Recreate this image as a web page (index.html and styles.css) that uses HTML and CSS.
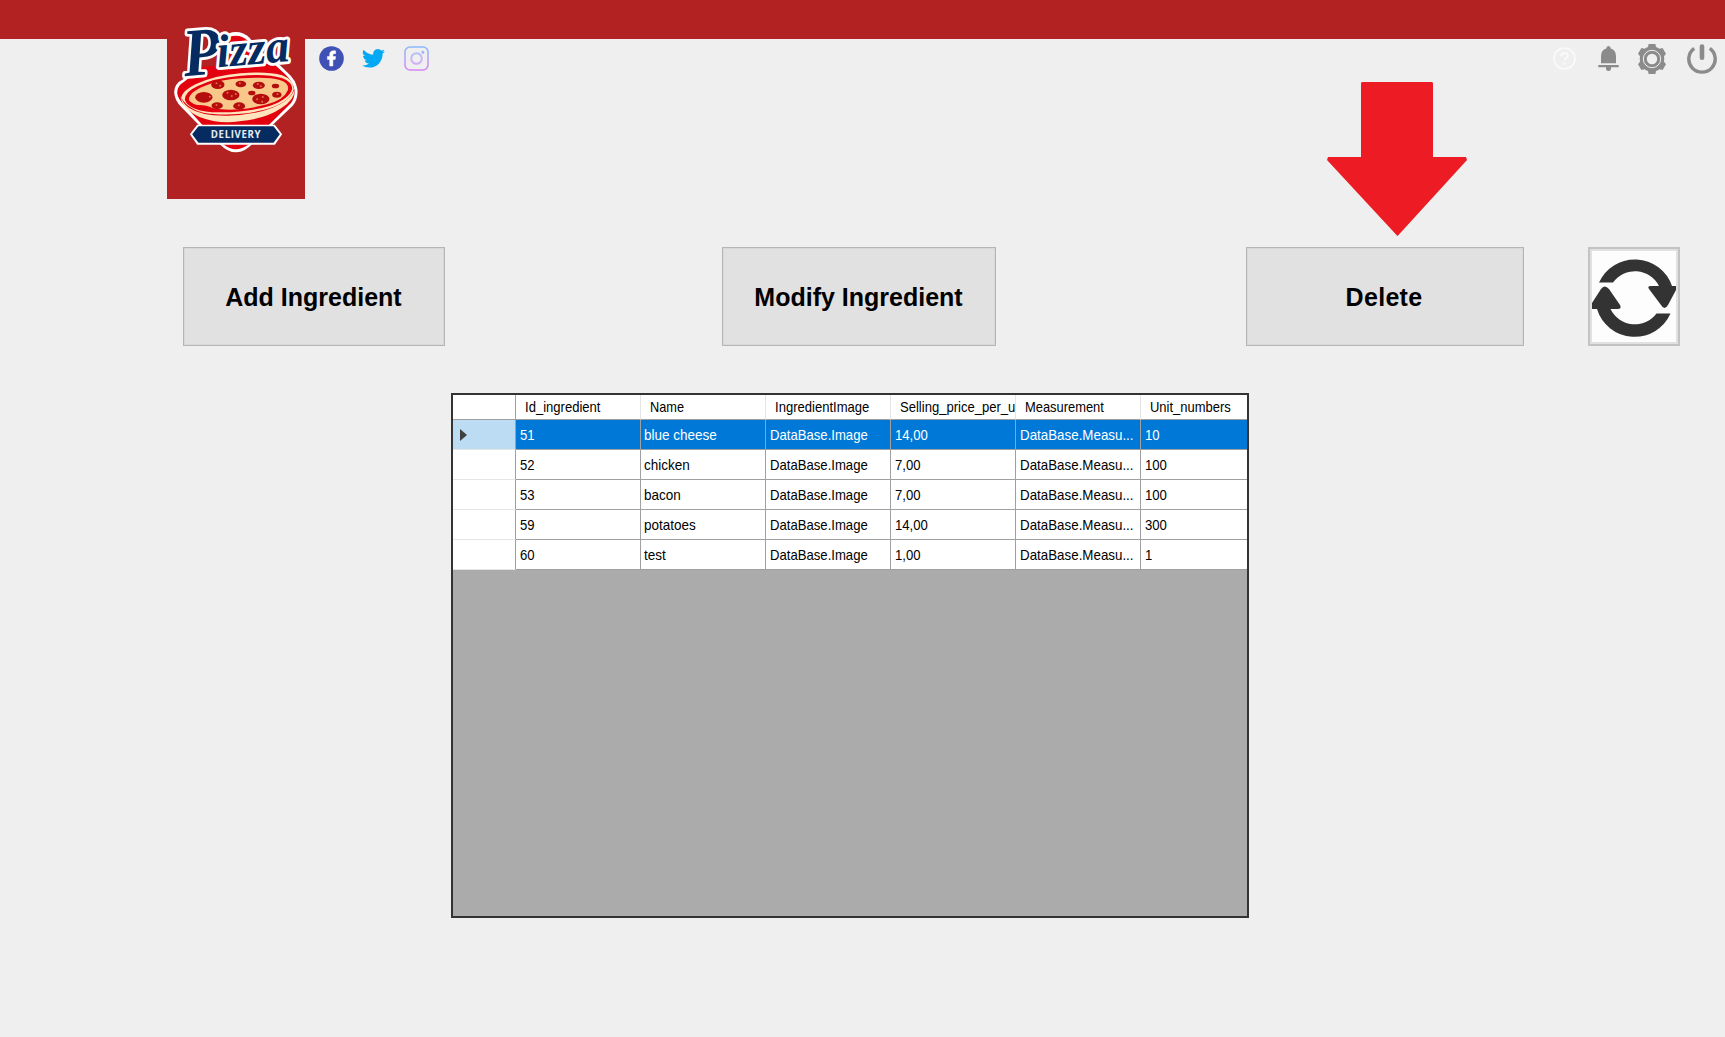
FILE: index.html
```html
<!DOCTYPE html>
<html lang="en">
<head>
<meta charset="utf-8">
<title>Pizza Delivery - Ingredients</title>
<link rel="stylesheet" href="styles.css">
</head>
<body>
<header class="topbar"></header>
<section class="toolbar">
  <div class="brand">
    <svg class="logo" viewBox="22 117 413 480" role="img" aria-label="Pizza Delivery">
      <circle cx="228" cy="153" r="57" fill="#fff"/>
      <path d="M70 238 Q43 251 43 277 Q44 302 65 322 L120 378 L178 431 Q205 458 230 457 Q255 456 278 431 L338 375 L398 318 Q415 299 413 270 Q409 240 382 217 L350 185 L120 205Z" fill="#fff"/>
      <circle cx="228" cy="156" r="49" fill="#e3000f"/>
      <path d="M72 246 Q52 257 52 278 Q53 296 76 318 L128 375 L186 430 Q210 449 230 448 Q250 447 271 430 L330 372 L393 310 Q406 292 404 270 Q400 246 376 223 L340 190 L130 200Z" fill="#e3000f"/>
      <path d="M62 288 Q65 326 119 351 Q176 373 239 364 Q318 356 365 324 Q405 300 404 268 Q392 302 338 323 Q281 345 205 347 Q126 349 87 323 Q68 310 62 288Z" fill="#ffe5bd"/>
      <path d="M64 293 Q68 272 107 253 Q164 226 242 220 Q322 213 367 226 Q400 238 402 267 Q393 304 329 325 Q259 347 170 343 Q91 339 64 293Z" fill="#ffe5bd"/>
      <path d="M75 299 Q75 275 114 258 Q163 234 237 228 Q318 220 366 234 Q397 245 397 267 Q388 298 329 318 Q260 338 178 337 Q88 336 75 299Z" fill="#e3000f"/>
      <path d="M88 301 Q83 278 136 257 Q185 238 247 235 Q323 229 360 240 Q389 249 384 271 Q372 300 322 313 Q282 324 237 328 Q196 332 158 324 Q139 314 112 315 Q94 311 88 301Z" fill="#fac78b"/>
      <g fill="#b30d0d">
        <ellipse cx="132" cy="292" rx="26" ry="16"/><ellipse cx="213" cy="285" rx="26" ry="16"/>
        <ellipse cx="303" cy="297" rx="26" ry="16"/><ellipse cx="174" cy="254" rx="20" ry="13"/>
        <ellipse cx="243" cy="252" rx="16" ry="10"/><ellipse cx="297" cy="256" rx="18" ry="11"/>
        <ellipse cx="347" cy="258" rx="11" ry="7"/><ellipse cx="276" cy="279" rx="11" ry="7"/>
        <ellipse cx="351" cy="284" rx="14" ry="9"/><ellipse cx="172" cy="317" rx="17" ry="10"/>
        <ellipse cx="238" cy="318" rx="18" ry="11"/>
      </g>
      <g fill="#ec6b43">
        <circle cx="150" cy="290" r="3"/><circle cx="203" cy="278" r="3"/><circle cx="216" cy="288" r="3"/><circle cx="228" cy="282" r="3"/>
        <circle cx="292" cy="298" r="3"/><circle cx="309" cy="291" r="3"/><circle cx="307" cy="305" r="3"/><circle cx="170" cy="250" r="3"/>
        <circle cx="181" cy="257" r="3"/><circle cx="240" cy="250" r="3"/><circle cx="294" cy="252" r="3"/><circle cx="303" cy="259" r="3"/>
        <circle cx="170" cy="315" r="3"/><circle cx="237" cy="316" r="3"/><circle cx="353" cy="282" r="3"/>
      </g>
      <path d="M90 403 L112 374 H345 L367 403 L345 434 H112Z" fill="#fff"/>
      <path d="M97 403 L116 379 H341 L360 403 L341 428 H116Z" fill="#062b60"/>
      <text class="logo-sub" x="153" y="414" textLength="149">DELIVERY</text>
      <g class="logo-name" transform="rotate(-5 220 190)">
        <text x="72" y="216" font-size="204" textLength="112" lengthAdjust="spacingAndGlyphs">P</text>
        <text x="173" y="198" font-size="140" textLength="218" lengthAdjust="spacingAndGlyphs">izza</text>
      </g>
    </svg>
  </div>
  <nav class="social">
    <svg width="25" height="25" viewBox="0 0 25 25"><circle cx="12.5" cy="12.5" r="12.3" fill="#3f51b5"/><path d="M10.700 20V13.500H8.400V10.500H10.700V8.600C10.700 6 12.100 4.800 14.500 4.800H16.600V7.700H15.200C14.200 7.700 13.900 8.100 13.900 9V10.500H16.600L16.200 13.500H13.900V20Z" fill="#fff" stroke="#fff" stroke-width=".5"/></svg>
    <svg width="23" height="21" viewBox="0 0 24 20"><path fill="#03a9f4" d="M24 2.400a10 10 0 0 1-2.800.8A5 5 0 0 0 23.300.5a10 10 0 0 1-3.100 1.200A4.920 4.920 0 0 0 11.800 6.200 14 14 0 0 1 1.700.9a4.900 4.900 0 0 0 1.500 6.600 5 5 0 0 1-2.200-.6c0 2.300 1.600 4.400 3.900 4.900a5 5 0 0 1-2.200.1 4.900 4.900 0 0 0 4.600 3.400A9.900 9.900 0 0 1 0 17.300 13.900 13.900 0 0 0 7.500 19.500c9.100 0 14.300-7.700 14-14.600A10 10 0 0 0 24 2.400Z"/></svg>
    <svg width="25" height="25" viewBox="0 0 25 25" fill="none" stroke="url(#ig)" stroke-width="1.600"><defs><linearGradient id="ig" gradientUnits="userSpaceOnUse" x1="12" y1="0" x2="12" y2="25"><stop stop-color="#84baff"/><stop offset=".5" stop-color="#b9a6fb"/><stop offset="1" stop-color="#d982f5"/></linearGradient></defs><rect x="1" y="1" width="23" height="23" rx="5"/><circle cx="12.500" cy="12.500" r="5.300" stroke-width="2" opacity=".75"/><circle cx="18.900" cy="6.200" r=".7"/></svg>
  </nav>
  <nav class="system">
    <svg width="23" height="23" viewBox="0 0 23 23"><circle cx="11.500" cy="11.500" r="10.500" fill="none" stroke="#fafafa" stroke-width="1.700"/><path d="M8.300 9.200C8.300 5 14.800 5 14.800 8.900C14.800 11 11.600 11.200 11.600 13.600" fill="none" stroke="#fafafa" stroke-width="2"/><circle cx="11.600" cy="16.500" r="1.200" fill="#fafafa"/></svg>
    <svg width="21" height="26" viewBox="0 0 21 26" fill="#8b8b8b"><path d="M8.300 2.500Q8.300 0 10.500 0T12.700 2.500Q18 4 18 10V17.300H3V10Q3 4 8.300 2.500ZM.3 19H20.700V21.300H.3ZM8 21.300H13V23Q13 25 10.500 25T8 23Z"/></svg>
    <svg width="28" height="30" viewBox="0 0 28 30"><path d="M10.600 0H17.400L18 3Q20 3.600 21.500 4.800L24.600 4L28 9.700L26 12.200Q26.500 15 26 17.800L28 20.300L24.600 26L21.500 25.200Q20 26.400 18 27L17.400 30H10.600L10 27Q8 26.400 6.500 25.200L3.400 26L0 20.300L2 17.800Q1.500 15 2 12.200L0 9.700L3.400 4L6.500 4.800Q8 3.600 10 3Z" fill="#8b8b8b"/><circle cx="14" cy="15" r="8.700" fill="none" stroke="#efefef" stroke-width="1"/><circle cx="14" cy="15" r="5.200" fill="#efefef"/></svg>
    <svg width="30" height="30" viewBox="0 0 30 30" fill="none" stroke="#8b8b8b"><path d="M7.200 4.300A13.200 13.200 0 1 0 22.800 4.300" stroke-width="3.400"/><path d="M15 2.500V13.800" stroke-width="4.600" stroke-linecap="round"/></svg>
  </nav>
</section>

<main>
  <div class="actions">
    <button class="btn add">Add Ingredient</button>
    <button class="btn modify">Modify Ingredient</button>
    <button class="btn delete">Delete</button>
    <button class="btn refresh" aria-label="Refresh">
      <svg viewBox="0 0 84 92" fill="#333">
        <path d="M7 31.500A39.300 39.300 0 0 1 80 35H84V39L76 54Q72.500 60 69 54L57 38Q55 35 59 35H67A27 27 0 0 0 21 31.500Z"/>
        <path d="M78.500 62.500A39.300 39.300 0 0 1 5 58H0V52L9 38Q12.500 33 17 38L28 54Q30 58 26 58H18.500A27 27 0 0 0 64.500 62.500Z"/>
      </svg>
    </button>
    <svg class="pointer" viewBox="0 0 140 154"><path d="M35 0H105L106 1V75H139L140 78L71.500 153L70.500 154L69.500 153L0 78L1 75H34V1Z" fill="#ed1c24"/></svg>
  </div>

  <div class="datagrid">
    <table>
      <colgroup><col class="c-row"><col class="c"><col class="c"><col class="c"><col class="c"><col class="c"><col class="c-last"></colgroup>
      <thead><tr><th></th><th><span class="w-id">Id_ingredient</span></th><th><span class="w-name">Name</span></th><th><span class="w-image">IngredientImage</span></th><th><span class="w-price">Selling_price_per_u</span></th><th><span class="w-measure">Measurement</span></th><th><span class="w-units">Unit_numbers</span></th></tr></thead>
      <tbody>
        <tr class="selected"><td><i class="marker"></i></td><td><span>51</span></td><td><span>blue cheese</span></td><td><span>DataBase.Image</span></td><td><span>14,00</span></td><td><span>DataBase.Measu...</span></td><td><span>10</span></td></tr>
        <tr><td></td><td><span>52</span></td><td><span>chicken</span></td><td><span>DataBase.Image</span></td><td><span>7,00</span></td><td><span>DataBase.Measu...</span></td><td><span>100</span></td></tr>
        <tr><td></td><td><span>53</span></td><td><span>bacon</span></td><td><span>DataBase.Image</span></td><td><span>7,00</span></td><td><span>DataBase.Measu...</span></td><td><span>100</span></td></tr>
        <tr><td></td><td><span>59</span></td><td><span>potatoes</span></td><td><span>DataBase.Image</span></td><td><span>14,00</span></td><td><span>DataBase.Measu...</span></td><td><span>300</span></td></tr>
        <tr><td></td><td><span>60</span></td><td><span>test</span></td><td><span>DataBase.Image</span></td><td><span>1,00</span></td><td><span>DataBase.Measu...</span></td><td><span>1</span></td></tr>
      </tbody>
    </table>
  </div>
</main>
</body>
</html>
```
FILE: styles.css
```css
* { box-sizing: border-box; }
body {
  margin: 0;
  height: 1037px;
  overflow: hidden;
  background: #efefef;
  font-family: "Liberation Sans", Arial, sans-serif;
  color: #000;
}
.topbar { height: 39px; background: #b22222; }
.toolbar { display: flex; align-items: flex-start; height: 208px; padding-left: 167px; }
.brand { width: 138px; height: 160px; background: #b22222; }
.logo { display: block; width: 138px; height: 160px; overflow: visible; }
.logo-sub { font: bold 29px "Open Sans", sans-serif; fill: #e8ecf2; }
.logo-name {
  font-family: "Liberation Serif", serif;
  font-weight: bold;
  font-style: italic;
  fill: #062b60;
  stroke: #fff;
  stroke-width: 17px;
  stroke-linejoin: round;
  paint-order: stroke;
}
.social, .system { display: flex; align-items: center; height: 39px; }
.social { gap: 18px; padding-left: 14px; }
.social svg:last-child { margin-left: 1px; }
.system { margin-left: auto; padding-right: 8px; }
.system svg + svg { margin-left: 21px; }
.system svg:nth-child(2) { margin-left: 22px; }
.system svg:nth-child(3) { margin-left: 19px; }

.actions { position: relative; display: flex; height: 99px; padding-left: 183px; }
.btn {
  display: flex;
  align-items: center;
  justify-content: center;
  height: 99px;
  padding: 2px 1px 0 0;
  background: #e1e1e1;
  border: 1px solid #b5b5b5;
  outline: 1px solid #d8d8d8;
  outline-offset: -2px;
  font: bold 25px "Liberation Sans", Arial, sans-serif;
  color: #000;
}
.add { width: 262px; }
.modify { width: 274px; margin-left: 277px; }
.delete { width: 278px; margin-left: 250px; padding-right: 2px; letter-spacing: .3px; }
.refresh { width: 92px; margin-left: 64px; padding: 0; background: #fdfdfd; border: 2px solid #c3c3c3; outline: 2px solid #e1e1e1; outline-offset: -4px; }
.refresh svg { width: 84px; height: 92px; }
.pointer { position: absolute; left: 1327px; top: -165px; width: 140px; height: 154px; }

.datagrid {
  width: 798px;
  height: 525px;
  margin: 47px 0 0 451px;
  border: 2px solid #333;
  background: #ababab;
  overflow: hidden;
}
table { width: 795px; table-layout: fixed; border-collapse: separate; border-spacing: 0; font-size: 15px; }
.c-row { width: 63px; }
.c { width: 125px; }
.c-last { width: 107px; }
th, td {
  height: 30px;
  padding: 0 0 0 4px;
  overflow: hidden;
  background: #fff;
  border-right: 1px solid #a0a0a0;
  border-bottom: 1px solid #a0a0a0;
  text-align: left;
  white-space: nowrap;
  font-weight: normal;
  line-height: 20px;
}
th { height: 25px; padding-left: 9px; border-right-color: #e5e5e5; }
th:first-child { border-right-color: #a0a0a0; }
th:last-child, td:last-child { border-right: 0; }
td:first-child { padding-left: 7px; border-bottom-color: #e5e5e5; }
td:nth-child(3) { padding-left: 3px; }
span { display: inline-block; transform: scaleX(.875); transform-origin: left center; }
td:nth-child(3) span { transform: scaleX(.9); }
td:nth-child(6) span { transform: scaleX(.89); }
.w-id { transform: scaleX(.87); }
.w-name { transform: scaleX(.85); }
.w-image { transform: scaleX(.87); }
.w-price { transform: scaleX(.87); }
.w-measure { transform: scaleX(.86); }
.w-units { transform: scaleX(.865); }
.selected td { background: #0078d7; color: #fff; }
.selected td:first-child { background: #bcdcf4; }
.marker { display: block; width: 0; height: 0; border: 6px solid transparent; border-left: 7px solid #404040; border-right: 0; }
```
